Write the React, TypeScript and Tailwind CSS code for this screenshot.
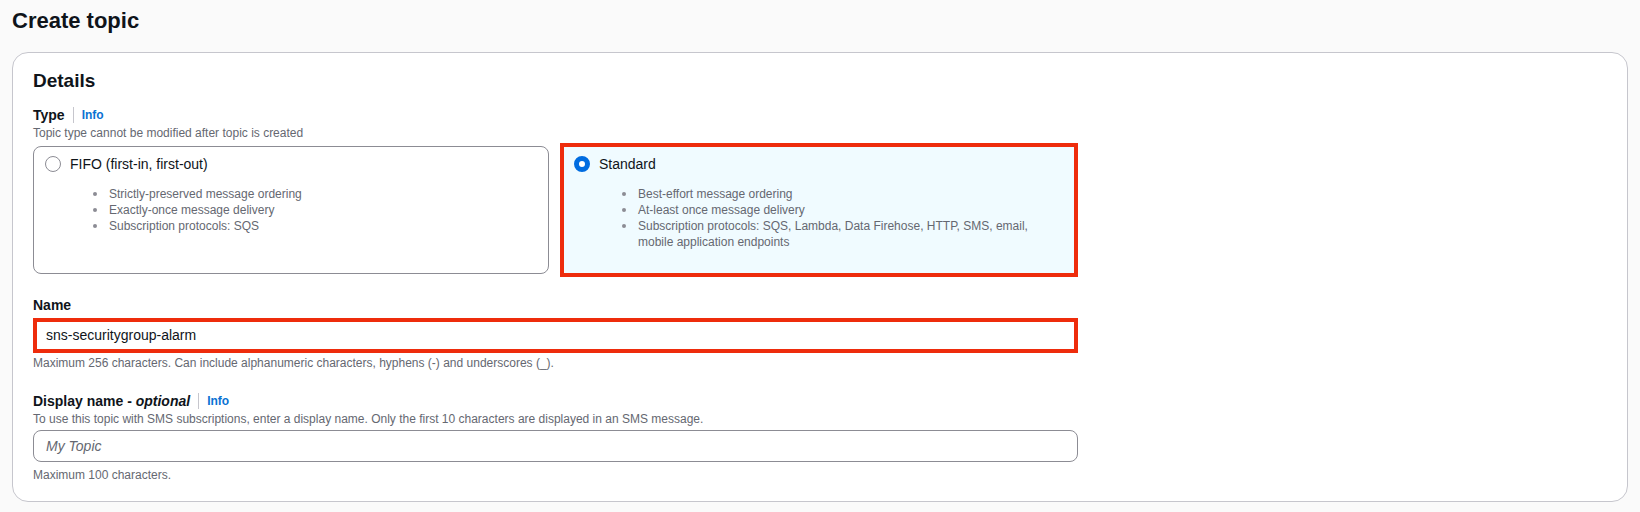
const fifoPoints: string[][] = [
  ['Strictly-preserved message ordering'],
  ['Exactly-once message delivery'],
  ['Subscription protocols: SQS'],
];

const standardPoints: string[][] = [
  ['Best-effort message ordering'],
  ['At-least once message delivery'],
  ['Subscription protocols: SQS, Lambda, Data Firehose, HTTP, SMS, email,', 'mobile application endpoints'],
];

function Bullets({ items }: { items: string[][] }) {
  return (
    <ul className="mt-[12px] pl-[48px] text-[12px] leading-[16px] text-[#656871]">
      {items.map((lines, i) => (
        <li key={i} className="flex">
          <span className="mt-[6px] mr-[12px] h-[4px] w-[4px] shrink-0 rounded-full bg-[#8c8c94]" />
          <span>
            {lines.map((line, j) => (
              <span key={j} className="block whitespace-nowrap">
                {line}
              </span>
            ))}
          </span>
        </li>
      ))}
    </ul>
  );
}

function InfoLabel({ children }: { children: React.ReactNode }) {
  return (
    <div className="flex items-center text-[14px] leading-[20px] font-bold text-[#0f141a]">
      <span>{children}</span>
      <span className="mx-[8px] h-[16px] w-px bg-[#c6c6cd]" />
      <span className="text-[12px] text-[#0972d3]">Info</span>
    </div>
  );
}

export default function App() {
  return (
    <div className="min-h-screen bg-[#fafafa] px-[12px] pt-[7px] font-['Liberation_Sans',Arial,sans-serif] text-[#0f141a]">
      <h1 className="text-[22px] leading-[28px] font-bold">Create topic</h1>

      <div className="mt-[17px] rounded-[16px] border border-[#c6c6cd] bg-white px-[20px] pt-[17px] pb-[18px]">
        <h2 className="text-[19px] leading-[22px] font-bold">Details</h2>

        {/* Type */}
        <div className="mt-[13px]">
          <InfoLabel>Type</InfoLabel>
          <p className="text-[12px] leading-[16px] text-[#656871]">
            Topic type cannot be modified after topic is created
          </p>
        </div>

        <div className="mt-[2px] flex items-center gap-[11px]">
          <div className="h-[128px] w-[516px] rounded-[8px] border border-[#8c8c94] bg-white px-[11px] pt-[7px]">
            <div className="flex items-center gap-[9px] text-[14px] leading-[20px]">
              <span className="h-[16px] w-[16px] rounded-full border-[1.5px] border-[#8c8c94] bg-white" />
              <span>FIFO (first-in, first-out)</span>
            </div>
            <Bullets items={fifoPoints} />
          </div>

          <div className="h-[134px] w-[518px] border-4 border-[#ee2c0c] bg-[#f0fbff] px-[10px] pt-[7px]">
            <div className="flex items-center gap-[9px] text-[14px] leading-[20px]">
              <span className="h-[16px] w-[16px] rounded-full border-[5px] border-[#006ce0] bg-white" />
              <span>Standard</span>
            </div>
            <Bullets items={standardPoints} />
          </div>
        </div>

        {/* Name */}
        <div className="mt-[18px] text-[14px] leading-[20px] font-bold">Name</div>
        <div className="mt-[3px] h-[35px] w-[1045px] border-4 border-[#ee2c0c] bg-white pl-[9px] text-[14px] leading-[27px]">
          sns-securitygroup-alarm
        </div>
        <p className="mt-[2px] text-[12px] leading-[16px] text-[#656871]">
          Maximum 256 characters. Can include alphanumeric characters, hyphens (-) and underscores (_).
        </p>

        {/* Display name */}
        <div className="mt-[20px]">
          <InfoLabel>
            Display name - <i>optional</i>
          </InfoLabel>
          <p className="text-[12px] leading-[16px] text-[#656871]">
            To use this topic with SMS subscriptions, enter a display name. Only the first 10 characters are displayed in an SMS message.
          </p>
        </div>
        <div className="mt-[3px] flex h-[32px] w-[1045px] items-center rounded-[8px] border border-[#8c8c94] bg-white pl-[12px] text-[14px] italic text-[#656871]">
          My Topic
        </div>
        <p className="mt-[5px] text-[12px] leading-[16px] text-[#656871]">Maximum 100 characters.</p>
      </div>
    </div>
  );
}
